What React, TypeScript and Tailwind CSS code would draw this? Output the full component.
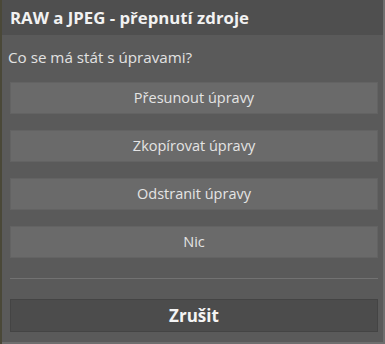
const options = ["Přesunout úpravy", "Zkopírovat úpravy", "Odstranit úpravy", "Nic"];

export default function App() {
  return (
    <div
      className="w-[385px] h-[344px] flex bg-[#5a5a5a] text-[#e6e6e6]"
      style={{ fontFamily: '"Open Sans", "Noto Sans", sans-serif' }}
    >
      {/* left edge of the window behind */}
      <div className="w-[2px] bg-[#4a4838]" />
      <div className="flex-1 flex flex-col border-r-2 border-b-2 border-[#6e6e6e]">
        {/* title bar */}
        <div className="h-[35px] bg-[#4f4f4f] flex items-center pl-[8px] text-[16.8px] font-bold text-[#f2f2f2]">
          RAW a JPEG - přepnutí zdroje
        </div>

        <div className="flex-1 flex flex-col pl-[8px] pr-[5px]">
          <div className="h-[47px] flex items-center -ml-[2px] text-[15.2px] text-[#e2e2e2] pb-[2px]">
            Co se má stát s úpravami?
          </div>

          <div className="flex flex-col gap-[16px]">
            {options.map((label) => (
              <button
                key={label}
                className="h-[32px] bg-[#6a6a6a] border border-[#636363] text-[14.5px] text-[#e4e4e4] flex items-center justify-center"
              >
                {label}
              </button>
            ))}
          </div>

          <div className="mt-[20px] h-px bg-[#727272]" />

          <button className="mt-[20px] h-[33px] bg-[#4c4c4c] border border-[#444444] text-[17px] font-bold text-[#f4f4f4] flex items-center justify-center">
            Zrušit
          </button>
        </div>
      </div>
    </div>
  );
}
